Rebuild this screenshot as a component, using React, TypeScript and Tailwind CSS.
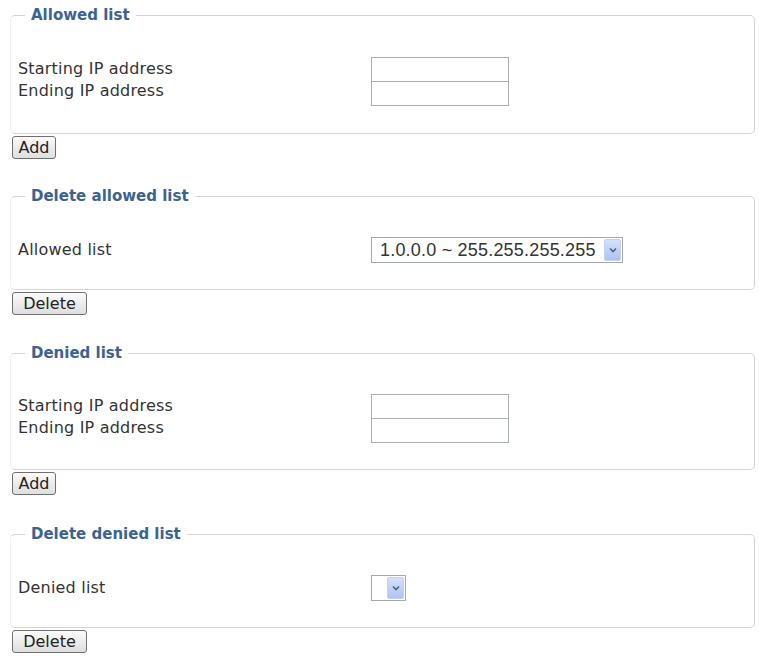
import type { ReactNode } from "react";

const labelFont = { fontFamily: '"DejaVu Sans", Verdana, sans-serif' };

function Section({ title, pad = "pb-[26px] pt-[32px]", children }: { title: string; pad?: string; children: ReactNode }) {
  return (
    <fieldset className={`rounded-[5px] border border-[#d4d4d4] border-l-[#f0f0f0] pl-[7px] ${pad}`}>
      <legend className="ml-[7px] px-[6px] text-[15px] font-bold leading-[18px] text-[#3b6392]">
        {title}
      </legend>
      {children}
    </fieldset>
  );
}

function TextBox({ className = "" }: { className?: string }) {
  return <input type="text" className={`block h-[25px] w-[138px] border border-[#a9aeb3] bg-white ${className}`} />;
}

function Arrow() {
  return (
    <span className="flex h-[22px] w-[17px] items-center justify-center rounded-[2px] border border-[#c3d3f5] bg-gradient-to-b from-[#d5e0fb] to-[#aec3ef]">
      <svg width="8" height="6" viewBox="0 0 8 6">
        <path d="M1 1.5 L4 4.5 L7 1.5" fill="none" stroke="#4d6185" strokeWidth="1.6" />
      </svg>
    </span>
  );
}

function Button({ label, width }: { label: string; width: string }) {
  return (
    <button
      type="button"
      className={`ml-[2px] mt-[2px] block h-[23px] ${width} rounded-[3px] border border-[#707070] bg-gradient-to-b from-[#fbfbfb] to-[#dedede] text-[16px] leading-[20px] text-[#222]`}
      style={labelFont}
    >
      {label}
    </button>
  );
}

function RangeFields() {
  return (
    <div className="flex text-[16px] leading-[22px] tracking-[0.2px] text-[#333]">
      <div className="w-[353px] pt-px">
        <div>Starting IP address</div>
        <div>Ending IP address</div>
      </div>
      <div>
        <TextBox />
        <TextBox className="-mt-px" />
      </div>
    </div>
  );
}

export default function App() {
  return (
    <div className="min-h-[656px] bg-white pl-[10px] pr-[4px] pt-[6px]" style={labelFont}>
      <Section title="Allowed list" pad="pb-[27px] pt-[33px]">
        <RangeFields />
      </Section>
      <Button label="Add" width="w-[44px]" />

      <div className="mt-[28px]">
        <Section title="Delete allowed list">
          <div className="flex items-center text-[16px] tracking-[0.2px] text-[#333]">
            <div className="w-[353px]">Allowed list</div>
            <div className="flex h-[26px] w-[252px] items-center justify-between border border-[#a3a9b2] bg-white pl-[8px] pr-[1px]">
              <span className="text-[18px] text-[#333]" style={{ fontFamily: '"Liberation Sans", Arial, sans-serif' }}>
                1.0.0.0 ~ 255.255.255.255
              </span>
              <Arrow />
            </div>
          </div>
        </Section>
      </div>
      <Button label="Delete" width="w-[75px]" />

      <div className="mt-[29px]">
        <Section title="Denied list">
          <RangeFields />
        </Section>
      </div>
      <Button label="Add" width="w-[44px]" />

      <div className="mt-[30px]">
        <Section title="Delete denied list">
          <div className="flex items-center text-[16px] tracking-[0.2px] text-[#333]">
            <div className="w-[353px]">Denied list</div>
            <div className="flex h-[26px] w-[35px] items-center justify-end border border-[#a3a9b2] bg-white pr-[1px]">
              <Arrow />
            </div>
          </div>
        </Section>
      </div>
      <Button label="Delete" width="w-[75px]" />
    </div>
  );
}
